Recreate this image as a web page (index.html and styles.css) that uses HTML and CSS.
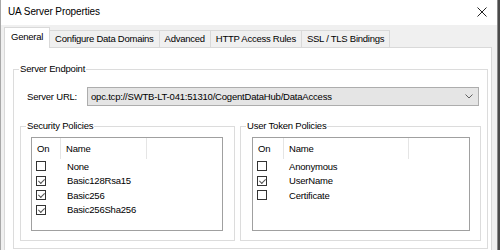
FILE: index.html
```html
<!DOCTYPE html>
<html lang="en">
<head>
    <meta charset="UTF-8">
    <meta name="viewport" content="width=device-width, initial-scale=1.0">
    <title>UA Server Properties</title>
    <link rel="stylesheet" href="styles.css">
</head>
<body>

<div class="window">
    <div class="titlebar">
        <span class="title">UA Server Properties</span>
        <svg class="close" width="10" height="10" viewBox="0 0 10 10">
            <path d="M0.5 0.5 L9.5 9.5 M9.5 0.5 L0.5 9.5" stroke="#222" stroke-width="1" fill="none"/>
        </svg>
    </div>

    <div class="dialog">
        <div class="tabs">
            <div class="tab active">General</div>
            <div class="tab">Configure Data Domains</div>
            <div class="tab">Advanced</div>
            <div class="tab">HTTP Access Rules</div>
            <div class="tab">SSL / TLS Bindings</div>
        </div>

        <div class="panel">
            <fieldset class="group endpoint">
                <legend>Server Endpoint</legend>

                <div class="url-row">
                    <label class="url-label">Server URL:</label>
                    <div class="combo">
                        <span class="combo-text">opc.tcp://SWTB-LT-041:51310/CogentDataHub/DataAccess</span>
                        <svg class="chevron" width="8" height="5" viewBox="0 0 8 5">
                            <path d="M0.5 0.5 L4 4 L7.5 0.5" stroke="#606060" stroke-width="1" fill="none"/>
                        </svg>
                    </div>
                </div>

                <div class="policies">
                    <fieldset class="group sub security">
                        <legend>Security Policies</legend>
                        <div class="listview">
                            <div class="lv-header">
                                <div class="col-on">On</div>
                                <div class="col-name">Name</div>
                                <div class="col-rest"></div>
                            </div>
                            <div class="lv-row"><span class="check"></span><span class="lv-name">None</span></div>
                            <div class="lv-row"><span class="check checked"></span><span class="lv-name">Basic128Rsa15</span></div>
                            <div class="lv-row"><span class="check checked"></span><span class="lv-name">Basic256</span></div>
                            <div class="lv-row"><span class="check checked"></span><span class="lv-name">Basic256Sha256</span></div>
                        </div>
                    </fieldset>

                    <fieldset class="group sub tokens">
                        <legend>User Token Policies</legend>
                        <div class="listview">
                            <div class="lv-header">
                                <div class="col-on">On</div>
                                <div class="col-name">Name</div>
                                <div class="col-rest"></div>
                            </div>
                            <div class="lv-row"><span class="check"></span><span class="lv-name">Anonymous</span></div>
                            <div class="lv-row"><span class="check checked"></span><span class="lv-name">UserName</span></div>
                            <div class="lv-row"><span class="check"></span><span class="lv-name">Certificate</span></div>
                        </div>
                    </fieldset>
                </div>
            </fieldset>
        </div>
    </div>
</div>

</body>
</html>
```

FILE: styles.css
```css
body {
    margin: 0;
    background-color: #4a4a4a;
    font-family: "Liberation Sans", Arial, sans-serif;
    font-size: 9.5px;
    letter-spacing: -0.2px;
    color: #000;
    overflow: hidden;
}
.window {
    width: 496px;
    height: 250px;
    border-left: 1px solid #a8a8a8;
    border-right: 1px solid #8a8a8a;
    background-color: #f0f0f0;
    overflow: hidden;
}
.titlebar {
    height: 25px;
    background-color: #fff;
    display: flex;
    align-items: center;
    justify-content: space-between;
    padding: 0 8px 2px 7px;
    box-sizing: border-box;
}
.title {
    font-size: 10px;
    letter-spacing: -0.1px;
}
.close {
    margin-right: 2px;
}
.dialog {
    padding-left: 3px;
}
.tabs {
    height: 22px;
    display: flex;
    align-items: flex-end;
}
.tab {
    height: 16px;
    line-height: 16px;
    padding: 0 5px;
    letter-spacing: -0.25px;
    background-color: #f0f0f0;
    border: 1px solid #d9d9d9;
    border-bottom: none;
    border-left: none;
}
.tab.active {
    height: 20px;
    line-height: 18px;
    padding: 0 6px;
    background-color: #fff;
    border-left: 1px solid #d9d9d9;
    margin-bottom: -1px;
    position: relative;
}
.panel {
    width: 486px;
    height: 220px;
    background-color: #fff;
    border: 1px solid #d9d9d9;
}
.group {
    margin: 0;
    padding: 0;
    border: 1px solid #dcdcdc;
    min-width: 0;
}
.group legend {
    padding: 0 1px;
    margin-left: 5px;
    line-height: 14px;
}
.endpoint {
    margin: 14px 3px 0 8px;
    height: 187px;
    box-sizing: border-box;
}
.url-row {
    display: flex;
    align-items: center;
    margin-top: 11px;
    padding: 0 8px 0 13px;
}
.url-label {
    width: 60px;
    flex-shrink: 0;
}
.combo {
    flex-grow: 1;
    height: 19px;
    box-sizing: border-box;
    background-color: #e5e5e5;
    border: 1px solid #adadad;
    display: flex;
    align-items: center;
    justify-content: space-between;
    padding: 0 5px 0 3px;
}
.policies {
    display: flex;
    gap: 5px;
    margin-top: 13px;
    padding: 0 6px;
}
.sub.security {
    width: 213px;
    flex-shrink: 0;
}
.sub.tokens {
    flex-grow: 1;
}
.listview {
    height: 94px;
    box-sizing: border-box;
    margin: 4px 11px 9px 10px;
    border: 1px solid #a0a0a0;
    background-color: #fff;
}
.tokens .listview {
    margin: 4px 10px 9px 11px;
}
.lv-header {
    display: flex;
    height: 21px;
    line-height: 21px;
}
.lv-header > div {
    border-right: 1px solid #e5e5e5;
    padding-left: 5px;
    box-sizing: border-box;
}
.lv-header .col-rest {
    border-right: none;
    flex-grow: 1;
}
.security .col-on { width: 29px; }
.security .col-name { width: 86px; }
.tokens .col-on { width: 31px; }
.tokens .col-name { width: 125px; }
.lv-row {
    display: flex;
    align-items: center;
    height: 14.5px;
}
.check {
    width: 10px;
    height: 10px;
    box-sizing: border-box;
    border: 1px solid #333;
    margin-left: 4px;
    flex-shrink: 0;
    position: relative;
}
.check.checked::after {
    content: "";
    position: absolute;
    left: 1px;
    top: 0px;
    width: 5px;
    height: 3px;
    border-left: 1px solid #555;
    border-bottom: 1px solid #555;
    transform: translate(0.5px, 1.5px) rotate(-45deg);
}
.security .lv-name { margin-left: 21px; }
.tokens .lv-name { margin-left: 22px; }
```
